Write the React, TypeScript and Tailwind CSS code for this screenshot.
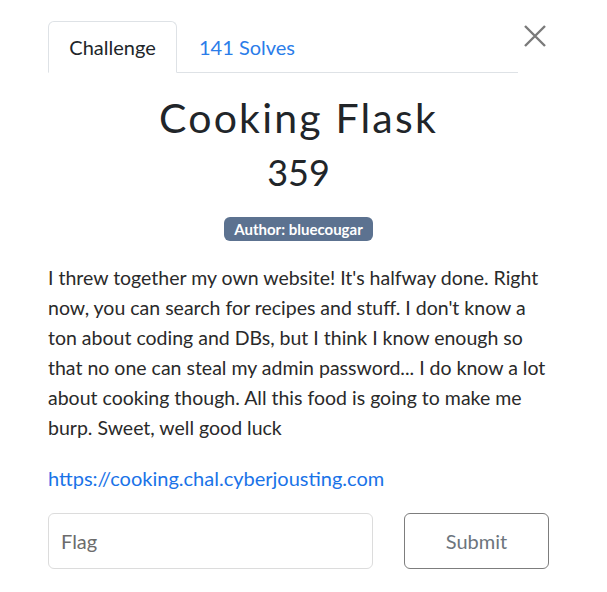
import React from "react";

export default function App() {
  return (
    <div
      className="w-[607px] h-[592px] bg-white text-[#212529]"
      style={{ fontFamily: "Lato, 'Noto Sans', sans-serif" }}
    >
      <div className="pl-[48px] pr-[58px] pt-[21px]">
        <div className="flex items-start">
          <div className="flex flex-1 border-b border-[#dee2e6] h-[52px]">
            <div className="w-[129px] h-[52px] -mb-px border border-[#dee2e6] border-b-white rounded-t-[6px] bg-white flex items-center justify-center text-[20px] text-[#212529]">
              Challenge
            </div>
            <div className="px-[22px] h-[51px] flex items-center text-[20px] text-[#2b7de9]">
              141 Solves
            </div>
          </div>
          <button className="w-[28px] h-[30px] flex items-center justify-center ml-[3px]">
            <svg width="22" height="22" viewBox="0 0 22 22">
              <path d="M1 1 L21 21 M21 1 L1 21" stroke="#7a7a7a" strokeWidth="2.4" />
            </svg>
          </button>
        </div>

        <div className="flex flex-col items-center">
          <h2 className="mt-[20px] text-[41px] leading-[50px] tracking-[2.2px] text-[#212529]">
            Cooking Flask
          </h2>
          <h3 className="mt-[7px] text-[36px] leading-[44px] text-[#212529]">359</h3>
          <span className="mt-[23px] h-[24px] px-[10px] rounded-[6px] bg-[#5c7290] text-white text-[15px] font-bold flex items-center">
            Author: bluecougar
          </span>
        </div>

        <p className="mt-[22px] w-[503px] text-[19.5px] leading-[30px] text-[#2a2a2a]">
          I threw together my own website! It's halfway done. Right now, you can search for recipes
          and stuff. I don't know a ton about coding and DBs, but I think I know enough so that no
          one can steal my admin password... I do know a lot about cooking though. All this food is
          going to make me burp. Sweet, well good luck
        </p>

        <p className="mt-[20px] text-[20px] leading-[30px]">
          <a className="text-[#1a73e8]">https://cooking.chal.cyberjousting.com</a>
        </p>

        <div className="mt-[20px] flex gap-[31px]">
          <div className="w-[325px] h-[56px] border border-[#dcdcdc] rounded-[6px] flex items-center px-[12px] text-[20px] text-[#6c6c6c]">
            Flag
          </div>
          <div className="flex-1 h-[56px] border border-[#7d7d7d] rounded-[6px] flex items-center justify-center text-[20px] text-[#6c757d]">
            Submit
          </div>
        </div>
      </div>
    </div>
  );
}
